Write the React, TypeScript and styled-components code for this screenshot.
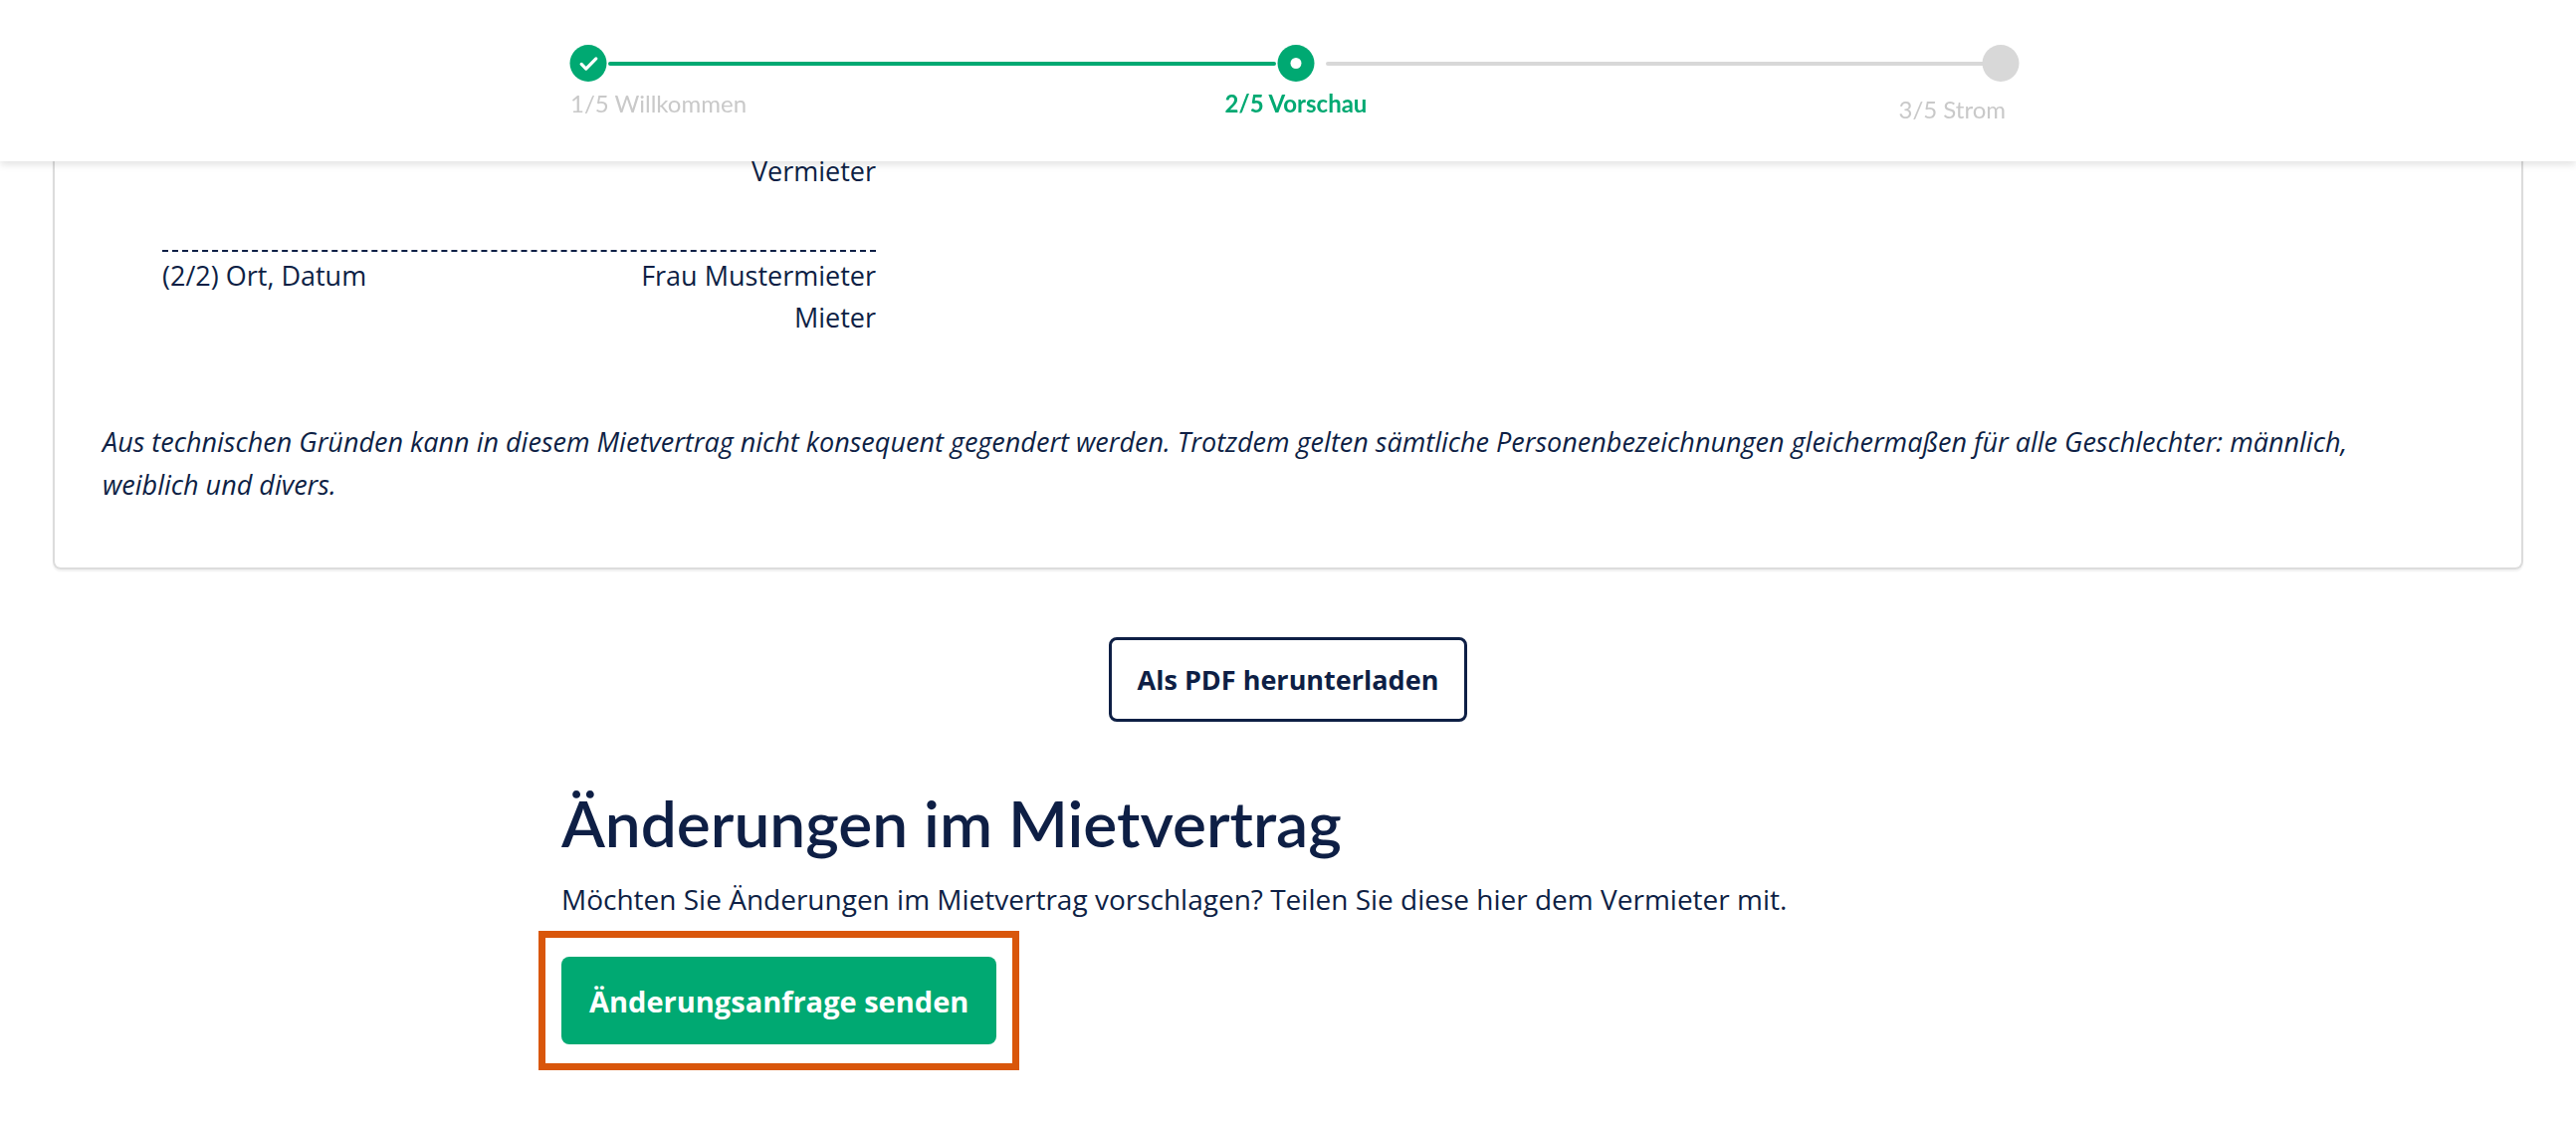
import React from 'react';
import styled, { createGlobalStyle } from 'styled-components';

const navy = '#0e1f45';
const green = '#00a972';

const GlobalStyle = createGlobalStyle`
  body {
    margin: 0;
    background: #fff;
    font-family: "Open Sans", "Noto Sans", sans-serif;
    color: ${navy};
  }
`;

const Header = styled.header`
  position: fixed;
  top: 0;
  left: 0;
  right: 0;
  height: 162px;
  background: #fff;
  box-shadow: 0 3px 8px rgba(0, 0, 0, 0.12);
  z-index: 10;
  display: flex;
  justify-content: center;
`;

const Stepper = styled.div`
  width: 1442px;
  margin-top: 45px;
  display: grid;
  grid-template-columns: 1fr 1fr;
  position: relative;
`;

const Segment = styled.div<{ $done: boolean }>`
  display: flex;
  align-items: center;
  height: 37px;
  &::before {
    content: '';
    flex: 1;
    height: 4px;
    margin: 0 12px 0 38px;
    background: ${(p) => (p.$done ? green : '#d8d8d8')};
    border-radius: 2px;
  }
`;

const Dot = styled.div<{ $state: 'done' | 'current' | 'todo' }>`
  position: absolute;
  top: 0;
  width: 37px;
  height: 37px;
  border-radius: 50%;
  background: ${(p) => (p.$state === 'todo' ? '#d8d8d8' : green)};
  display: flex;
  align-items: center;
  justify-content: center;
  transform: translateX(-50%);
`;

const StepLabel = styled.div<{ $active?: boolean }>`
  position: absolute;
  top: 44px;
  font-family: Lato, sans-serif;
  font-size: 24px;
  font-weight: ${(p) => (p.$active ? 700 : 400)};
  color: ${(p) => (p.$active ? green : '#c9c9c9')};
  white-space: nowrap;
`;

const Main = styled.main`
  padding: 120px 53px 0;
  margin-top: 18px;
`;

const Card = styled.section`
  border: 2px solid #dcdcdc;
  border-top: none;
  border-radius: 0 0 8px 8px;
  box-shadow: 0 2px 2px rgba(0, 0, 0, 0.06);
  padding: 12px 48px 62px;
`;

const Signature = styled.div`
  width: 717px;
  margin-left: 60px;
  font-size: 27px;
  line-height: 43px;
`;

const Right = styled.div`
  text-align: right;
`;

const SigLine = styled.div`
  margin-top: 58px;
  border-top: 2px dashed ${navy};
  display: flex;
  justify-content: space-between;
  line-height: 48px;
`;

const Note = styled.p`
  margin: 82px 0 0;
  font-size: 27px;
  font-style: italic;
  line-height: 43px;
  max-width: 2330px;
`;

const Center = styled.div`
  display: flex;
  justify-content: center;
  margin-top: 68px;
`;

const OutlineButton = styled.button`
  height: 85px;
  padding: 0 26px;
  border: 3px solid ${navy};
  border-radius: 8px;
  background: #fff;
  color: ${navy};
  font-family: inherit;
  font-weight: 700;
  font-size: 27px;
`;

const Changes = styled.section`
  margin-left: 511px;
  margin-top: 62px;
`;

const Title = styled.h2`
  margin: 0;
  font-family: Lato, sans-serif;
  font-size: 64px;
  font-weight: 600;
  line-height: 80px;
`;

const Text = styled.p`
  margin: 16px 0 0;
  font-size: 28px;
  line-height: 40px;
`;

const Highlight = styled.div`
  display: inline-block;
  margin: 12px 0 0 -23px;
  border: 7px solid #d9560b;
  padding: 19px 16px 19px 16px;
`;

const PrimaryButton = styled.button`
  height: 88px;
  padding: 0 28px;
  border: none;
  border-radius: 8px;
  background: ${green};
  color: #fff;
  font-family: inherit;
  font-weight: 700;
  font-size: 29px;
`;

export default function App() {
  return (
    <>
      <GlobalStyle />
      <Header>
        <Stepper>
          <Segment $done />
          <Segment $done={false} />
          <Dot $state="done" style={{ left: 18 }}>
            <svg width="22" height="22" viewBox="0 0 24 24" fill="none" stroke="#fff" strokeWidth="3.5" strokeLinecap="round" strokeLinejoin="round">
              <path d="M4 12.5l5 5L20 6.5" />
            </svg>
          </Dot>
          <Dot $state="current" style={{ left: 729 }}>
            <div style={{ width: 11, height: 11, borderRadius: '50%', background: '#fff' }} />
          </Dot>
          <Dot $state="todo" style={{ left: 1437 }} />
          <StepLabel style={{ left: 0 }}>1/5 Willkommen</StepLabel>
          <StepLabel $active style={{ left: 729, transform: 'translateX(-50%)' }}>2/5 Vorschau</StepLabel>
          <StepLabel style={{ right: 0, top: 50 }}>3/5 Strom</StepLabel>
        </Stepper>
      </Header>
      <Main>
        <Card>
          <Signature>
            <Right>Vermieter</Right>
            <SigLine>
              <span>(2/2) Ort, Datum</span>
              <span>Frau Mustermieter</span>
            </SigLine>
            <Right style={{ marginTop: -4 }}>Mieter</Right>
          </Signature>
          <Note>
            Aus technischen Gründen kann in diesem Mietvertrag nicht konsequent gegendert werden. Trotzdem gelten sämtliche Personenbezeichnungen gleichermaßen für alle Geschlechter: männlich, weiblich und divers.
          </Note>
        </Card>
        <Center>
          <OutlineButton>Als PDF herunterladen</OutlineButton>
        </Center>
        <Changes>
          <Title>Änderungen im Mietvertrag</Title>
          <Text>Möchten Sie Änderungen im Mietvertrag vorschlagen? Teilen Sie diese hier dem Vermieter mit.</Text>
          <Highlight>
            <PrimaryButton>Änderungsanfrage senden</PrimaryButton>
          </Highlight>
        </Changes>
      </Main>
    </>
  );
}
